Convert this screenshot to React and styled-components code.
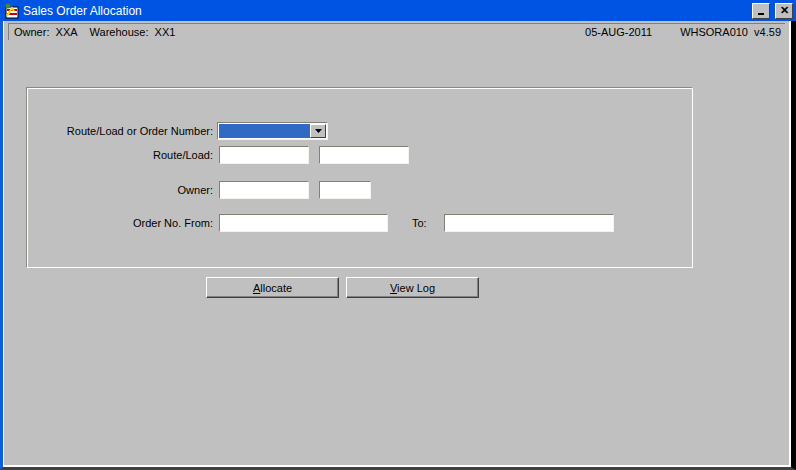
import React from "react";
import styled, { createGlobalStyle } from "styled-components";

const G = createGlobalStyle`
  html,body{margin:0;padding:0;background:#c0c0c0;}
  body{font-family:"Liberation Sans",Arial,sans-serif;font-size:11px;color:#000;}
`;
const Win = styled.div`
  width:796px;height:470px;box-sizing:border-box;background:#c0c0c0;
  border-left:3px solid #0a5ee6;border-right:5px solid #000;border-bottom:3px solid #404040;
  display:flex;flex-direction:column;
`;
const Title = styled.div`
  height:21px;background:#0054e3;display:flex;align-items:center;padding:0 3px 0 4px;
  color:#fff;font-size:12px;gap:3px;margin-left:-3px;margin-right:-5px;
`;
const TitleText = styled.span`flex:1;`;
const Ctl = styled.div`
  width:16px;height:14px;background:#c0c0c0;border:1px solid;border-color:#fff #404040 #404040 #fff;
  display:flex;align-items:center;justify-content:center;color:#000;font-size:11px;font-weight:bold;margin-left:2px;
`;
const Body = styled.div`
  flex:1;border-left:1px solid #fff;border-right:2px solid #fff;border-bottom:2px solid #fff;
  display:flex;flex-direction:column;
`;
const Status = styled.div`
  margin:2px 4px 0 4px;height:16px;display:flex;align-items:center;padding:0 0 0 5px;
  border-top:1px solid #808080;border-left:1px solid #808080;background:#c0c0c0;gap:12px;
`;
const Spacer = styled.span`flex:1;`;
const Right = styled.span`margin-left:16px;padding-right:4px;`;
const Frame = styled.div`
  margin:47px 0 0 22px;width:667px;height:181px;border:1px solid;border-color:#8a8a80 #fff #fff #8a8a80;
  box-shadow:inset 1px 1px 0 #fff;box-sizing:border-box;display:grid;
  grid-template-columns:190px auto;align-content:start;padding-top:33px;
`;
const Label = styled.div`padding-right:4px;height:${p=>p.h}px;display:flex;align-items:center;justify-content:flex-end;`;
const Fields = styled.div`display:flex;align-items:center;gap:${p=>p.gap||10}px;height:${p=>p.h}px;`;
const Input = styled.div`
  width:${p=>p.w}px;height:18px;background:#fff;box-sizing:border-box;
  border:1px solid;border-color:#808074 #f4f4ec #f4f4ec #808074;margin-left:${p=>p.ml||0}px;
`;
const ToLabel = styled.span`margin:0 7px 0 14px;`;
const Select = styled.div`
  width:111px;height:18px;box-sizing:border-box;display:flex;background:#fff;
  border:1px solid;border-color:#808074 #f4f4ec #f4f4ec #808074;padding:1px;
`;
const Sel = styled.div`flex:1;background:#316ac5;`;
const Arrow = styled.div`
  width:14px;background:#c0c0c0;border:1px solid;border-color:#fff #404040 #404040 #fff;
  display:flex;align-items:center;justify-content:center;
`;
const Buttons = styled.div`display:flex;gap:7px;margin:9px 0 0 202px;`;
const Btn = styled.button`
  width:133px;height:21px;background:#c0c0c0;font:inherit;font-size:11px;padding:0;
  border:1px solid;border-color:#fff #404040 #404040 #fff;box-shadow:inset -1px -1px 0 #808080;
  u{text-decoration:underline;}
`;

export default function App(){
  return (<Win><G/>
    <Title>
      <svg width="16" height="16" viewBox="0 0 16 16"><rect x="2" y="4" width="12" height="11" fill="#fff" stroke="#000"/><rect x="3" y="6" width="10" height="2" fill="#c00"/><rect x="3" y="10" width="10" height="2" fill="#c00"/><path d="M3 13l5-8 2 3" stroke="#ffd800" strokeWidth="2" fill="none"/><circle cx="4" cy="3" r="2.5" fill="#3a8a4a"/></svg>
      <TitleText>Sales Order Allocation</TitleText>
      <Ctl><svg width="8" height="8"><rect x="1" y="6" width="6" height="2" fill="#000"/></svg></Ctl>
      <Ctl>✕</Ctl>
    </Title>
    <Body>
      <Status><span>Owner:&nbsp; XXA</span><span>Warehouse:&nbsp; XX1</span><Spacer/><span>05-AUG-2011</span><Right>WHSORA010&nbsp; v4.59</Right></Status>
      <Frame>
        <Label h={19}>Route/Load or Order Number:</Label><Fields h={19}><Select><Sel/><Arrow><svg width="7" height="4"><path d="M0 0h7L3.5 4z" fill="#000"/></svg></Arrow></Select></Fields>
        <Label h={29}>Route/Load:</Label><Fields h={29}><Input w={90} ml={2}/><Input w={90}/></Fields>
        <Label h={41}>Owner:</Label><Fields h={41}><Input w={90} ml={2}/><Input w={52}/></Fields>
        <Label h={25}>Order No. From:</Label><Fields h={25} gap={0}><Input w={169} ml={2}/><ToLabel>To:</ToLabel><Input w={170}/></Fields>
      </Frame>
      <Buttons><Btn><u>A</u>llocate</Btn><Btn><u>V</u>iew Log</Btn></Buttons>
    </Body>
  </Win>);
}
